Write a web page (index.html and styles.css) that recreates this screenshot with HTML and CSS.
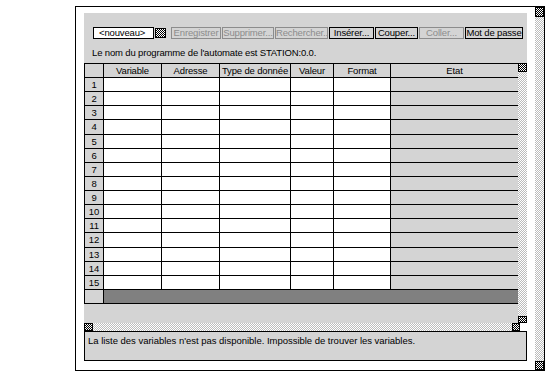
FILE: index.html
```html
<!DOCTYPE html>
<html lang="fr">
<head>
<meta charset="utf-8">
<title>Table des variables</title>
<link rel="stylesheet" href="styles.css">
</head>
<body>
<div class="frame">
  <div class="main">
    <div class="panel">
      <div class="toolbar">
        <div class="combo">&lt;nouveau&gt;</div>
        <span class="combo-btn box"></span>
        <div class="buttons">
          <button class="btn off w-enr">Enregistrer</button>
          <button class="btn off w-sup">Supprimer...</button>
          <button class="btn off w-rech">Rechercher..</button>
          <button class="btn w-ins">Insérer...</button>
          <button class="btn w-cou">Couper...</button>
          <button class="btn off w-col">Coller...</button>
          <button class="btn w-mdp">Mot de passe</button>
        </div>
      </div>
      <p class="label">Le nom du programme de l'automate est STATION:0.0.</p>
      <div class="grid-area">
        <div class="table-col">
          <table class="vars">
            <colgroup>
              <col class="c-num"><col class="c-var"><col class="c-adr"><col class="c-type"><col class="c-val"><col class="c-fmt"><col class="c-etat">
            </colgroup>
            <thead>
              <tr><th></th><th>Variable</th><th>Adresse</th><th>Type de donnée</th><th>Valeur</th><th>Format</th><th>Etat</th></tr>
            </thead>
            <tbody>
              <tr><td class="num">1</td><td></td><td></td><td></td><td></td><td></td><td class="etat"></td></tr>
              <tr><td class="num">2</td><td></td><td></td><td></td><td></td><td></td><td class="etat"></td></tr>
              <tr><td class="num">3</td><td></td><td></td><td></td><td></td><td></td><td class="etat"></td></tr>
              <tr><td class="num">4</td><td></td><td></td><td></td><td></td><td></td><td class="etat"></td></tr>
              <tr><td class="num">5</td><td></td><td></td><td></td><td></td><td></td><td class="etat"></td></tr>
              <tr><td class="num">6</td><td></td><td></td><td></td><td></td><td></td><td class="etat"></td></tr>
              <tr><td class="num">7</td><td></td><td></td><td></td><td></td><td></td><td class="etat"></td></tr>
              <tr><td class="num">8</td><td></td><td></td><td></td><td></td><td></td><td class="etat"></td></tr>
              <tr><td class="num">9</td><td></td><td></td><td></td><td></td><td></td><td class="etat"></td></tr>
              <tr><td class="num">10</td><td></td><td></td><td></td><td></td><td></td><td class="etat"></td></tr>
              <tr><td class="num">11</td><td></td><td></td><td></td><td></td><td></td><td class="etat"></td></tr>
              <tr><td class="num">12</td><td></td><td></td><td></td><td></td><td></td><td class="etat"></td></tr>
              <tr><td class="num">13</td><td></td><td></td><td></td><td></td><td></td><td class="etat"></td></tr>
              <tr><td class="num">14</td><td></td><td></td><td></td><td></td><td></td><td class="etat"></td></tr>
              <tr><td class="num">15</td><td></td><td></td><td></td><td></td><td></td><td class="etat"></td></tr>
            </tbody>
            <tfoot>
              <tr class="bar"><td class="num"></td><td class="dark" colspan="6"></td></tr>
            </tfoot>
          </table>
        </div>
        <div class="vscroll">
          <span class="box vs-top"></span>
          <span class="track"></span>
          <span class="box vs-bot"></span>
        </div>
      </div>
    </div>
    <div class="hscroll">
      <span class="box hs-left"></span>
      <span class="track"></span>
      <span class="box hs-right"></span>
    </div>
    <div class="msg">La liste des variables n'est pas disponible. Impossible de trouver les variables.</div>
  </div>
  <div class="outer-scroll">
    <span class="box os-top"></span>
    <span class="track"></span>
    <span class="box os-bot"></span>
  </div>
</div>
</body>
</html>
```
FILE: styles.css
```css
* { box-sizing: border-box; }

html, body {
  margin: 0;
  padding: 0;
  background: #fff;
}

body {
  width: 552px;
  height: 377px;
  font-family: "Liberation Sans", Arial, sans-serif;
  font-size: 9.5px;
  letter-spacing: -0.15px;
  color: #000;
}

.frame {
  display: flex;
  margin: 6px 0 0 75px;
  width: 470px;
  height: 365px;
  border: 1px solid #000;
}

.main {
  display: flex;
  flex-direction: column;
  width: 443px;
  margin-left: 8px;
  padding-top: 6px;
}

.panel {
  height: 310px;
  background: #d4d4d4;
  padding-top: 14px;
  display: flex;
  flex-direction: column;
}

.toolbar {
  display: flex;
  align-items: flex-start;
  height: 12px;
  padding-left: 9px;
}

.combo {
  width: 61px;
  height: 12px;
  border: 1px solid #000;
  background: #fff;
  padding-left: 5px;
  line-height: 10px;
  white-space: nowrap;
}

.combo-btn {
  width: 11px;
  height: 10px;
  margin: 1px 5px 0 1px;
}

.buttons {
  display: flex;
  gap: 1px;
}

.btn {
  height: 12px;
  border: 1px solid #000;
  background: transparent;
  font: inherit;
  letter-spacing: inherit;
  line-height: 10px;
  padding: 0;
  color: #000;
  text-align: center;
  white-space: nowrap;
  overflow: hidden;
}

.btn.off {
  color: #8c8c8c;
  border-color: #8c8c8c;
}

.w-enr { width: 50px; }
.w-sup { width: 52px; }
.w-rech { width: 53px; }
.w-ins { width: 45px; }
.w-cou { width: 43px; }
.w-col { width: 45px; }
.w-mdp { width: 58px; }

.label {
  margin: 8px 0 4px 8px;
  height: 12px;
  line-height: 12px;
  white-space: nowrap;
}

.grid-area {
  display: flex;
  flex: 1;
}

.table-col {
  width: 434px;
}

.vars {
  border-collapse: separate;
  border-spacing: 0;
  table-layout: fixed;
  width: 434px;
}

.c-num { width: 19px; }
.c-var { width: 58px; }
.c-adr { width: 58px; }
.c-type { width: 71px; }
.c-val { width: 43px; }
.c-fmt { width: 57px; }
.c-etat { width: 128px; }

.vars th,
.vars td {
  padding: 0;
  border-left: 1px solid #000;
  border-bottom: 1px solid #000;
  line-height: 13px;
  font-weight: normal;
  text-align: center;
  white-space: nowrap;
  overflow: hidden;
}

.vars th {
  border-top: 1px solid #000;
  background: #d4d4d4;
}

.vars td { background: #fff; }
.vars td.num,
.vars td.etat { background: #d4d4d4; }
.vars td.dark { background: #808080; }

.vars tbody tr { height: 14.133px; }
.vars tfoot tr { height: 14px; }

.track {
  flex: 1;
  background: repeating-conic-gradient(#bcbcbc 0 25%, #fff 0 50%) 0 0 / 2px 2px;
}

.box {
  display: block;
  border: 1px solid #000;
  background: repeating-conic-gradient(#000 0 25%, #fff 0 50%) 0 0 / 2px 2px;
}

.vscroll {
  width: 9px;
  display: flex;
  flex-direction: column;
}

.vs-top { height: 9px; }
.vs-bot { height: 7px; }

.hscroll {
  display: flex;
  width: 436px;
  height: 8px;
}

.hs-left { width: 9px; }
.hs-right { width: 8px; }

.msg {
  height: 30px;
  border: 1px solid #000;
  background: #d4d4d4;
  padding: 3px 3px 0;
  line-height: 12px;
  letter-spacing: -0.02px;
  white-space: nowrap;
}

.outer-scroll {
  width: 9px;
  margin-left: 8px;
  display: flex;
  flex-direction: column;
}

.os-top { height: 10px; }
.os-bot { height: 9px; }
```
